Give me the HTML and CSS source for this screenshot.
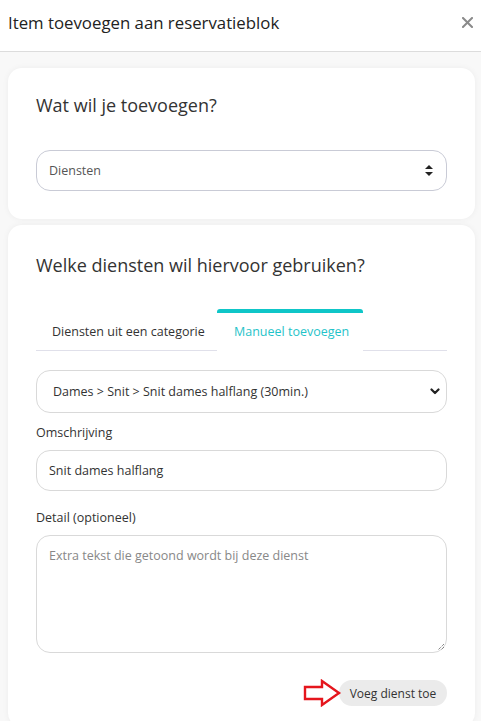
FILE: index.html
```html
<!DOCTYPE html>
<html lang="nl">
<head>
<meta charset="utf-8">
<title>Item toevoegen aan reservatieblok</title>
<link rel="stylesheet" href="styles.css">
</head>
<body>
<header class="modal-header">
  <h1 class="modal-title">Item toevoegen aan reservatieblok</h1>
  <svg class="close" width="11" height="11" viewBox="0 0 11 11"><path d="M1 1L10 10M10 1L1 10" stroke="#8a8a8a" stroke-width="2" stroke-linecap="square"/></svg>
</header>
<main class="modal-body">
  <section class="card card-first">
    <h2 class="card-title">Wat wil je toevoegen?</h2>
    <div class="field select select-first">
      <span>Diensten</span>
      <svg class="updown" width="8" height="11" viewBox="0 0 8 11"><path d="M4 0L8 4H0Z M4 11L0 7H8Z" fill="#222"/></svg>
    </div>
  </section>
  <section class="card card-second">
    <h2 class="card-title">Welke diensten wil hiervoor gebruiken?</h2>
    <nav class="tabs">
      <div class="tab tab-first">Diensten uit een categorie</div>
      <div class="tab active">Manueel toevoegen</div>
      <div class="tab-rest"></div>
    </nav>
    <div class="field select select-second">
      <span>Dames &gt; Snit &gt; Snit dames halflang (30min.)</span>
      <svg class="chev" width="10" height="7" viewBox="0 0 10 7"><path d="M1.5 1.5L5 5L8.5 1.5" stroke="#222" stroke-width="2.2" fill="none" stroke-linecap="round" stroke-linejoin="round"/></svg>
    </div>
    <label class="label label-first">Omschrijving</label>
    <div class="field input">Snit dames halflang</div>
    <label class="label label-second">Detail (optioneel)</label>
    <div class="field textarea">
      <span class="placeholder">Extra tekst die getoond wordt bij deze dienst</span>
      <svg class="grip" width="8" height="8" viewBox="0 0 8 8"><path d="M7 1L1 7M7 4L4 7" stroke="#555" stroke-width="1" stroke-dasharray="1 1"/></svg>
    </div>
    <div class="actions">
      <svg class="arrow" width="40" height="28" viewBox="0 0 40 28"><path d="M2 8H19V2L36 14L19 26V20H2Z" fill="none" stroke="#e5161d" stroke-width="2.4" stroke-linejoin="miter"/></svg>
      <button class="btn">Voeg dienst toe</button>
    </div>
  </section>
</main>
</body>
</html>
```
FILE: styles.css
```css
* { box-sizing: border-box; }
html, body { margin: 0; padding: 0; }
body {
  font-family: "Open Sans", "Noto Sans", sans-serif;
  color: #333;
  background: #f8f8f8;
  width: 481px;
  height: 721px;
  overflow: hidden;
}
.modal-header {
  background: #fff;
  height: 52px;
  border-bottom: 1px solid #dcdcdc;
  display: flex;
  align-items: center;
  justify-content: space-between;
  padding: 0 8px 6px 8px;
}
.modal-title {
  margin: 0;
  font-size: 16.8px;
  font-weight: 400;
  color: #222;
}
.modal-body {
  padding: 16px 6px 0 8px;
  display: flex;
  flex-direction: column;
  gap: 6px;
}
.card {
  background: #fff;
  border-radius: 14px;
  box-shadow: 0 0 6px rgba(0,0,0,0.05);
  padding: 0 28px;
}
.card-first { padding-top: 26px; padding-bottom: 28px; }
.card-second { padding-top: 29px; padding-bottom: 20px; }
.card-title {
  margin: 0;
  font-size: 18px;
  font-weight: 400;
  line-height: 23px;
  color: #333;
}
.field {
  border: 1px solid #d9d9d9;
  border-radius: 14px;
  font-size: 12.5px;
  color: #444;
  display: flex;
  align-items: center;
}
.select-first {
  margin-top: 33px;
  height: 41px;
  border-color: #c9cbd6;
  padding: 0 13px 0 12px;
  justify-content: space-between;
  color: #555;
}
.tabs {
  margin-top: 32px;
  display: flex;
  height: 42px;
}
.tab {
  font-size: 12.5px;
  white-space: nowrap;
  flex-shrink: 0;
  padding: 3px 0 0 16px;
  display: flex;
  align-items: center;
  border-bottom: 1px solid #e0e0ea;
  color: #333;
}
.tab-first { width: 181px; }
.tab.active {
  color: #1fc3c9;
  border-bottom-color: transparent;
  border-top: 4px solid #0fc6c8;
  border-radius: 3px 3px 0 0;
  padding: 0 0 0 17px;
  width: 146px;
}
.tab-rest { flex: 1; border-bottom: 1px solid #e0e0ea; }
.select-second {
  margin-top: 19px;
  height: 43px;
  padding: 0 6px 0 16px;
  justify-content: space-between;
  color: #333;
}
.label {
  display: block;
  font-size: 12.5px;
  color: #333;
  line-height: 17px;
}
.label-first { margin-top: 11px; }
.input {
  margin-top: 9px;
  height: 41px;
  padding: 0 12px;
  color: #333;
}
.label-second { margin-top: 18px; }
.textarea {
  margin-top: 9px;
  height: 118px;
  align-items: flex-start;
  padding: 11px 12px;
  position: relative;
}
.placeholder { color: #888; }
.grip { position: absolute; right: 1px; bottom: 1px; }
.actions {
  margin-top: 26px;
  display: flex;
  justify-content: flex-end;
  align-items: center;
}
.arrow { margin-right: -4px; position: relative; z-index: 1; }
.btn {
  font-family: inherit;
  font-size: 12px;
  color: #333;
  background: #ebebeb;
  border: none;
  border-radius: 13px;
  height: 26px;
  width: 108px;
  padding: 0;
}
```
